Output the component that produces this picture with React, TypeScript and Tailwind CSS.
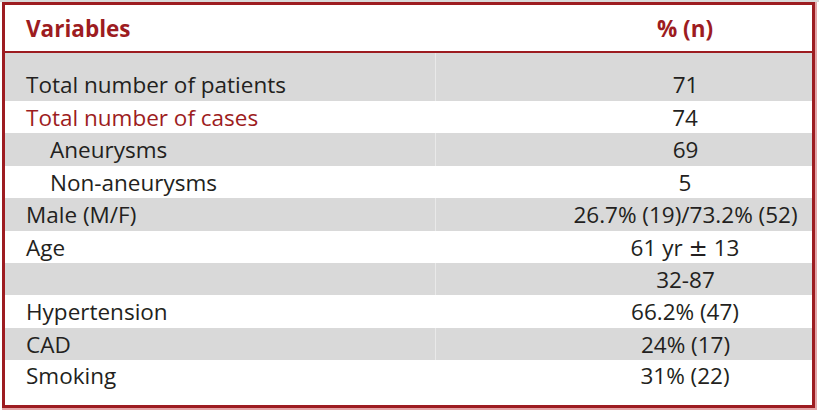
import React from "react";

type Row = { label: string; value: React.ReactNode; gray: boolean; red?: boolean; indent?: boolean };

const rows: Row[] = [
  { label: "Total number of cases", value: "74", gray: false, red: true },
  { label: "Aneurysms", value: "69", gray: true, indent: true },
  { label: "Non-aneurysms", value: "5", gray: false, indent: true },
  { label: "Male (M/F)", value: "26.7% (19)/73.2% (52)", gray: true },
  {
    label: "Age",
    value: (
      <span>
        61 yr{" "}
        <span className="text-[23px]" style={{ fontFamily: '"DejaVu Sans", sans-serif' }}>
          {"\u00B1"}
        </span>{" "}
        13
      </span>
    ),
    gray: false,
  },
  { label: "", value: "32-87", gray: true },
  { label: "Hypertension", value: "66.2% (47)", gray: false },
  { label: "CAD", value: "24% (17)", gray: true },
];

export default function App() {
  return (
    <div
      className="w-[819px] h-[412px] bg-white border-t-2 border-[#d9d9d9] text-[#231f20]"
      style={{ fontFamily: '"Open Sans", "Noto Sans", sans-serif' }}
    >
      <div className="ml-[2px] w-[813px] h-[406px] border-[3px] border-[#9d1c21] shadow-[1px_1px_0_1px_#e3a5a7] flex flex-col">
        <div className="h-[48px] grid grid-cols-[430px_1fr] items-center border-b-2 border-[#9d1c21] font-bold text-[#9d1c21] text-[22.5px]">
          <div className="pl-[21px] pt-[2px]">Variables</div>
          <div className="pl-[123px] pt-[2px] text-center">% (n)</div>
        </div>
        <div className="bg-[#d9d9d9] pt-[16px] grid grid-cols-[430px_1fr] text-[22.5px]">
          <div className="pl-[21px] h-[32px] flex items-center">Total number of patients</div>
          <div className="border-l border-[#e9e9e9] -mt-[16px] pt-[16px]">
            <div className="pl-[123px] text-center h-[32px] flex items-center justify-center">71</div>
          </div>
        </div>
        {rows.map((r, i) => (
          <div
            key={i}
            className={`grid grid-cols-[430px_1fr] h-[32.4px] text-[22.5px] ${r.gray ? "bg-[#d9d9d9]" : "bg-white"}`}
          >
            <div
              className={`flex items-center ${r.indent ? "pl-[45px]" : "pl-[21px]"} ${r.red ? "text-[#9d1c21]" : ""}`}
            >
              {r.label}
            </div>
            <div className={`flex items-center justify-center pl-[123px] ${r.gray ? "border-l border-[#e9e9e9]" : ""}`}>
              {r.value}
            </div>
          </div>
        ))}
        <div className="grid grid-cols-[430px_1fr] flex-1 text-[22.5px] bg-white">
          <div className="pl-[21px] h-[32px] flex items-center">Smoking</div>
          <div className="pl-[123px] h-[32px] flex items-center justify-center">31% (22)</div>
        </div>
      </div>
    </div>
  );
}
